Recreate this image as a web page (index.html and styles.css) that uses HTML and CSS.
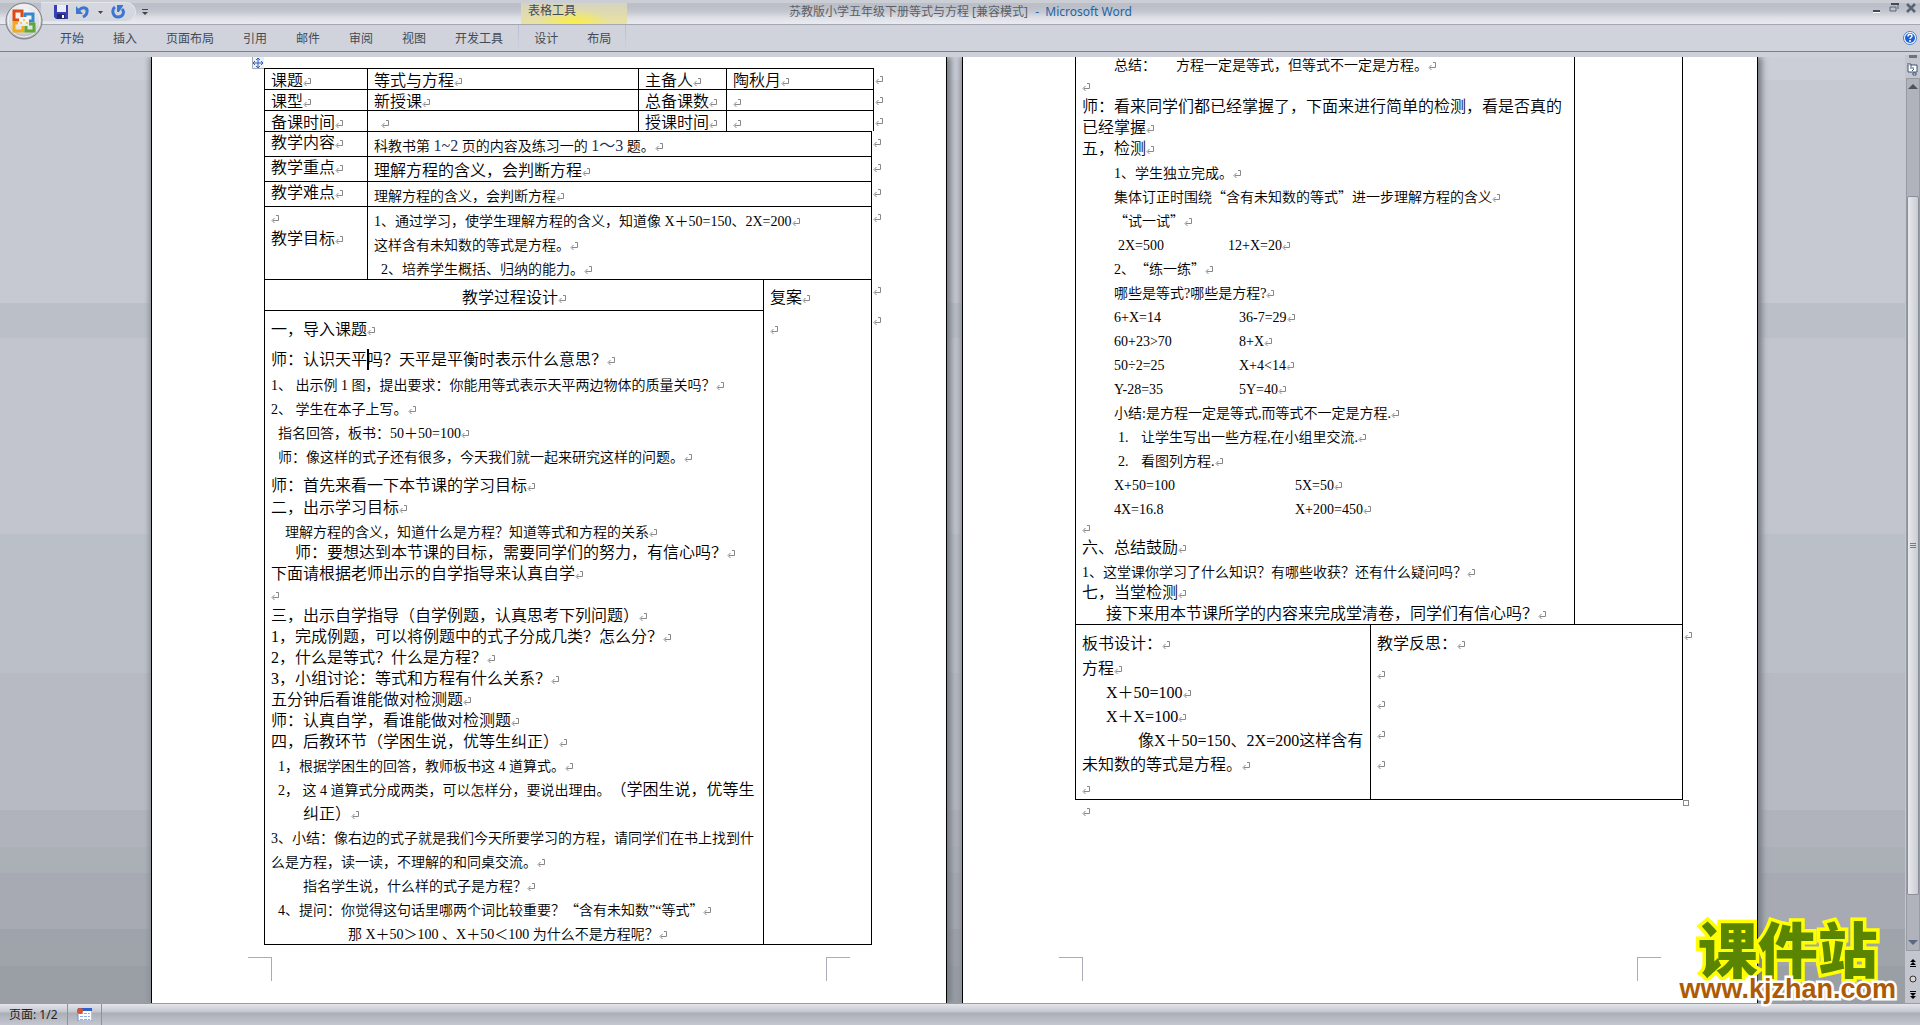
FILE: index.html
```html
<!DOCTYPE html>
<html lang="zh-CN">
<head>
    <meta charset="UTF-8">
    <meta name="viewport" content="width=device-width, initial-scale=1.0">
    <title>苏教版小学五年级下册等式与方程 - Microsoft Word</title>
    <link rel="stylesheet" href="styles.css">
</head>
<body>
    <header class="titlebar">
        <div class="quick-access">
            <button title="保存">
                <svg width="14" height="14" viewBox="0 0 14 14"><path d="M0 0h14v14H2l-2-2z" fill="#3b3fb5"/><path d="M3 0h9v7H3z" fill="#e9edfb"/><path d="M3 9h8v5H3z" fill="#23276f"/><path d="M8 10h2v3H8z" fill="#fff"/></svg>
            </button>
            <button title="撤消">
                <svg width="14" height="14" viewBox="0 0 14 14"><path d="M3 5c4-4 9-2 8 2 0 2-2 4-4 5" fill="none" stroke="#3d76d2" stroke-width="3"/><path d="M0 1v8h7z" fill="#3d76d2"/></svg>
            </button>
            <button title="撤消列表">
                <svg width="5" height="3" viewBox="0 0 5 3"><path d="M0 0h5L2.500 3z" fill="#444"/></svg>
            </button>
            <button title="重复">
                <svg width="14" height="14" viewBox="0 0 14 14"><path d="M4 2C0 5 2 12 7 12s7-5 4-8" fill="none" stroke="#3d76d2" stroke-width="3"/><path d="M6 0h6v1L8 7H6z" fill="#3d76d2"/></svg>
            </button>
        </div>
        <button class="customize" title="自定义快速访问工具栏">
            <svg width="6" height="6" viewBox="0 0 6 6"><path d="M0 0h6v1H0zM0 3h6L3 6z" fill="#444"/></svg>
        </button>
        <div class="context-title">表格工具</div>
        <div class="doc-title">苏教版小学五年级下册等式与方程 [兼容模式] <span class="app-name">- &nbsp;Microsoft Word</span></div>
        <div class="window-buttons">
            <button title="最小化"><svg width="10" height="10" viewBox="0 0 10 10"><path d="M1 7h7v2H1z" fill="#444a55"/><path d="M1 9h7v1H1z" fill="#fff"/></svg></button>
            <button title="还原"><svg width="10" height="10" viewBox="0 0 10 10"><path d="M2 1h7v5M1 4h6v4H1z" fill="none" stroke="#5a6478"/><path d="M2 0h8v2H2z" fill="#444a55"/></svg></button>
            <button title="关闭"><svg width="10" height="10" viewBox="0 0 10 10"><path d="M1 1l8 8M9 1L1 9" stroke="#596376" stroke-width="2.500"/></svg></button>
        </div>
    </header>
    <button class="office-button" title="Office 按钮">
        <svg width="38" height="38" viewBox="0 0 38 38">
            <defs>
                <radialGradient id="orb" cx="50%" cy="35%" r="65%"><stop offset="0" stop-color="#fff"/><stop offset="0.700" stop-color="#dcdde1"/><stop offset="1" stop-color="#a4a6ac"/></radialGradient>
            </defs>
            <circle cx="19" cy="19" r="18" fill="url(#orb)" stroke="#777a82"/>
            <circle cx="19" cy="19" r="16" fill="none" stroke="#f4f4f6"/>
            <g fill="none" stroke-width="3">
                <path d="M17 15V9H9v9h5" stroke="#dd4a13"/>
                <path d="M20 15v-3h8v7h-4" stroke="#3a86cf"/>
                <path d="M13 21H9v8h9v-5" stroke="#f3ab1b"/>
                <path d="M24 22h5v7h-8v-5" stroke="#5da837"/>
            </g>
            <path d="M18 17h2v2h-2zM15 20h2v2h-2zM21 20h2v2h-2z" fill="#f6c560"/>
        </svg>
    </button>
    <nav class="tabs">
        <button>开始</button>
        <button>插入</button>
        <button>页面布局</button>
        <button>引用</button>
        <button>邮件</button>
        <button>审阅</button>
        <button>视图</button>
        <button>开发工具</button>
        <div class="context-tabs">
            <button>设计</button>
            <button>布局</button>
        </div>
        <button class="help" title="帮助">
            <svg width="14" height="14" viewBox="0 0 14 14"><circle cx="7" cy="7" r="6.500" fill="#fff" stroke="#4a7ec4"/><circle cx="7" cy="7" r="5" fill="#1f5fd6"/><path d="M5 5.500c0-3 4-3 4-.5 0 1.500-2 1.500-2 3M7 9v2" fill="none" stroke="#fff" stroke-width="1.500"/></svg>
        </button>
    </nav>

    <div class="workspace">
        <main class="pages">
            <section class="page">
                <div class="sheet sheet-first">
                    <svg class="move-handle" width="12" height="12" viewBox="0 0 12 12"><path d="M0 0h12v12H0z" fill="#eef0f4"/><path d="M.5 0v11.500H12" fill="none" stroke="#a9abb0"/><path d="M6 1v10M1 6h10M4 3l2-2 2 2M4 9l2 2 2-2M3 4L1 6l2 2M9 4l2 2-2 2" fill="none" stroke="#2e5fc0"/></svg>
                    <table class="info">
                        <colgroup><col class="c-label"><col><col class="c-key"><col class="c-value"></colgroup>
                        <tr><td><p>课题</p></td><td><p>等式与方程</p></td><td><p>主备人</p></td><td class="last"><p>陶秋月</p></td></tr>
                        <tr><td><p>课型</p></td><td><p>新授课</p></td><td><p>总备课数</p></td><td class="last"><p></p></td></tr>
                        <tr><td><p>备课时间</p></td><td><p class="in1"></p></td><td><p>授课时间</p></td><td class="last"><p></p></td></tr>
                    </table>
                    <table class="plan">
                        <colgroup><col class="c-label"><col><col class="c-review"></colgroup>
                        <tr><td><p>教学内容</p></td><td class="last" colspan="2"><p class="small">科教书第 <span class="num">1~2</span> 页的内容及练习一的 <span class="num">1～3</span> 题。</p></td></tr>
                        <tr><td><p>教学重点</p></td><td class="last" colspan="2"><p class="mid">理解方程的含义，会判断方程</p></td></tr>
                        <tr><td><p>教学难点</p></td><td class="last" colspan="2"><p class="small">理解方程的含义，会判断方程</p></td></tr>
                        <tr>
                            <td><p></p><p>教学目标</p></td>
                            <td class="last" colspan="2">
                                <p class="small">1、通过学习，使学生理解方程的含义，知道像 X＋50=150、2X=200</p>
                                <p class="small">这样含有未知数的等式是方程。</p>
                                <p class="small in1">2、培养学生概括、归纳的能力。</p>
                            </td>
                        </tr>
                        <tr><td class="heading" colspan="2"><p>教学过程设计</p></td><td class="heading review last"><p>复案</p></td></tr>
                        <tr>
                            <td colspan="2">
                                <p class="big">一，导入课题</p>
                                <p class="big">师：认识天平<span class="caret"></span>吗？天平是平衡时表示什么意思？</p>
                                <p class="small">1、 出示例 1 图，提出要求：你能用等式表示天平两边物体的质量关吗？</p>
                                <p class="small">2、 学生在本子上写。</p>
                                <p class="small in1">指名回答，板书：50＋50=100</p>
                                <p class="small in1">师：像这样的式子还有很多，今天我们就一起来研究这样的问题。</p>
                                <p class="big">师：首先来看一下本节课的学习目标</p>
                                <p>二，出示学习目标</p>
                                <p class="small in2">理解方程的含义，知道什么是方程？知道等式和方程的关系</p>
                                <p class="in3">师：要想达到本节课的目标，需要同学们的努力，有信心吗？</p>
                                <p>下面请根据老师出示的自学指导来认真自学</p>
                                <p></p>
                                <p>三，出示自学指导（自学例题，认真思考下列问题）</p>
                                <p>1，完成例题，可以将例题中的式子分成几类？怎么分？</p>
                                <p>2，什么是等式？什么是方程？</p>
                                <p>3，小组讨论：等式和方程有什么关系？</p>
                                <p>五分钟后看谁能做对检测题</p>
                                <p>师：认真自学，看谁能做对检测题</p>
                                <p>四，后教环节（学困生说，优等生纠正）</p>
                                <p class="small in1">1，根据学困生的回答，教师板书这 4 道算式。</p>
                                <p class="small hanging">2， 这 4 道算式分成两类，可以怎样分，要说出理由。<span class="larger">（学困生说，优等生<br>纠正）</span></p>
                                <p class="small">3、小结：像右边的式子就是我们今天所要学习的方程，请同学们在书上找到什<br>么是方程，读一读，不理解的和同桌交流。</p>
                                <p class="small in4">指名学生说，什么样的式子是方程？</p>
                                <p class="small in1">4、提问：你觉得这句话里哪两个词比较重要？<span class="cjk">“</span>含有未知数”“等式<span class="cjk">”</span></p>
                                <p class="small in6">那 X＋50＞100 、X＋50＜100 为什么不是方程呢？</p>
                            </td>
                            <td class="open last"><p class="big"></p></td>
                        </tr>
                    </table>
                </div>
                <div class="corners"><i class="corner-left"></i><i class="corner-right"></i></div>
            </section>

            <section class="page">
                <div class="sheet sheet-second">
                    <table class="lesson">
                        <colgroup><col><col class="c-review"></colgroup>
                        <tr>
                            <td>
                                <p class="small in4 pair"><span class="w-note">总结：</span>方程一定是等式，但等式不一定是方程。</p>
                                <p></p>
                                <p>师：看来同学们都已经掌握了，下面来进行简单的检测，看是否真的<br>已经掌握</p>
                                <p>五，检测</p>
                                <p class="small in4">1、学生独立完成。</p>
                                <p class="small in4">集体订正时围绕<span class="cjk">“</span>含有未知数的等式<span class="cjk">”</span>进一步理解方程的含义</p>
                                <p class="small in4"><span class="cjk">“</span>试一试<span class="cjk">”</span></p>
                                <p class="small in4 pair"><span class="w-try">2X=500</span>12+X=20</p>
                                <p class="small in4">2、<span class="cjk">“</span>练一练<span class="cjk">”</span></p>
                                <p class="small in4">哪些是等式?哪些是方程?</p>
                                <p class="small in4 pair"><span class="w-ask">6+X=14</span>36-7=29</p>
                                <p class="small in4 pair"><span class="w-ask">60+23&gt;70</span>8+X</p>
                                <p class="small in4 pair"><span class="w-ask">50÷2=25</span>X+4&lt;14</p>
                                <p class="small in4 pair"><span class="w-ask">Y-28=35</span>5Y=40</p>
                                <p class="small in4">小结:是方程一定是等式,而等式不一定是方程.</p>
                                <p class="small in4 pair"><span class="w-item">1.</span>让学生写出一些方程,在小组里交流.</p>
                                <p class="small in4 pair"><span class="w-item">2.</span>看图列方程.</p>
                                <p class="small in4 pair"><span class="w-write">X+50=100</span>5X=50</p>
                                <p class="small in4 pair"><span class="w-write">4X=16.8</span>X+200=450</p>
                                <p class="blank"></p>
                                <p>六、总结鼓励</p>
                                <p class="small">1、这堂课你学习了什么知识？有哪些收获？还有什么疑问吗？</p>
                                <p>七，当堂检测</p>
                                <p class="in3">接下来用本节课所学的内容来完成堂清卷，同学们有信心吗？</p>
                            </td>
                            <td></td>
                        </tr>
                    </table>
                    <table class="board">
                        <colgroup><col class="c-board"><col></colgroup>
                        <tr>
                            <td>
                                <p class="big">板书设计：</p>
                                <p class="mid">方程</p>
                                <p class="mid in3">X＋50=100</p>
                                <p class="mid in3">X＋X=100</p>
                                <p class="mid board-text">像X＋50=150、2X=200这样含有<br>未知数的等式是方程。</p>
                                <p class="mid"></p>
                            </td>
                            <td class="last">
                                <p class="big">教学反思：</p>
                                <p class="big"></p>
                                <p class="big"></p>
                                <p class="big"></p>
                                <p class="big"></p>
                            </td>
                        </tr>
                    </table>
                    <span class="resize-handle"></span>
                    <p class="after-table"></p>
                </div>
                <div class="corners"><i class="corner-left"></i><i class="corner-right"></i></div>
            </section>
        </main>

        <aside class="scrollbar">
            <i class="split"></i>
            <button title="标尺"><svg width="13" height="14" viewBox="0 0 13 14"><path d="M2 3h9v7H2z" fill="#fff" stroke="#3d5272"/><path d="M1 2h4v3M6 9l2-2M7 11h3v2H7zM4 6h4" fill="#fff" stroke="#3d5272"/></svg></button>
            <div class="track">
                <svg width="10" height="6" viewBox="0 0 10 6"><path d="M0 6l5-5 5 5z" fill="#4d535e"/></svg>
                <div class="thumb"><i></i><i></i><i></i></div>
                <svg width="10" height="6" viewBox="0 0 10 6"><path d="M0 0h10L5 5z" fill="#5c6880"/></svg>
            </div>
            <button title="前一页"><svg width="8" height="8" viewBox="0 0 8 8"><path d="M1 3l3-3 3 3zM1 6l3-3 3 3zM1 7h6v1H1z"/></svg></button>
            <button title="选择浏览对象"><svg width="8" height="8" viewBox="0 0 8 8"><circle cx="4" cy="4" r="3" fill="#d6d6ce" stroke="#333"/></svg></button>
            <button title="下一页"><svg width="8" height="8" viewBox="0 0 8 8"><path d="M1 0h6v1H1zM1 2h6L4 5zM1 5h6L4 8z"/></svg></button>
        </aside>
    </div>

    <footer class="statusbar">
        <span class="page-count">页面: 1/2</span>
        <button title="宏录制">
            <svg width="15" height="13" viewBox="0 0 15 13"><path d="M1 1h14v12H1z" fill="#fff" stroke="#6d8fc4"/><path d="M1 0h14v3H1z" fill="#2f62c9"/><path d="M3 5h3v1H3zM7 5h3v1H7zM11 5h2v1h-2zM3 8h3v1H3zM7 8h3v1H7zM11 8h2v1h-2zM3 11h3v1H3zM7 11h3v1H7zM11 11h2v1h-2z" fill="#8fb0e0"/><circle cx="3" cy="3" r="3" fill="#d9532c"/></svg>
        </button>
    </footer>

    <a class="site-mark" href="#"><span class="site-name">课件站</span><span class="site-url">www.kjzhan.com</span></a>
</body>
</html>
```
FILE: styles.css
```css
* {
    box-sizing: border-box;
}
body {
    margin: 0;
    height: 100vh;
    display: flex;
    flex-direction: column;
    overflow: hidden;
    position: relative;
    font-family: "Noto Sans", "Noto Sans CJK SC", sans-serif;
    font-size: 12px;
    color: #444a55;
    background: #cdd0d8;
}
button {
    margin: 0;
    padding: 0;
    border: none;
    background: none;
    font: inherit;
    color: inherit;
    cursor: pointer;
}
svg {
    display: block;
}

/* title bar and ribbon tabs */
.titlebar {
    flex: none;
    display: grid;
    grid-template-columns: 95px 24px 361px 106px 1fr 56px;
    height: 25px;
    padding-left: 41px;
    border-bottom: 1px solid #a4a7af;
    background: linear-gradient(#cbced5 0 3px, #bcbfc7 3px 7px, #c5c8d0 12px, #dfe1e6 18px, #e8ebf2);
}
.quick-access {
    display: flex;
    align-items: center;
    gap: 8px;
    height: 20px;
    margin-top: 2px;
    padding-left: 13px;
    border: 1px solid #e4e6ea;
    border-left: none;
    border-radius: 0 10px 10px 0;
    background: #d4d7de;
}
.customize {
    justify-self: start;
    padding-left: 6px;
}
.context-title {
    grid-column: 4;
    padding-left: 7px;
    line-height: 16px;
    margin-top: 3px;
    background: radial-gradient(ellipse at bottom, #fbf03c, rgba(251, 240, 60, 0) 50%), linear-gradient(#d6d3bf, #e9e3a0);
}
.doc-title {
    padding-left: 162px;
    line-height: 24px;
    color: #5b5f69;
}
.app-name {
    padding-left: 4px;
    color: #2464a8;
}
.window-buttons {
    display: flex;
    gap: 7px;
    align-items: flex-start;
    padding: 3px 0 0 8px;
}
.office-button {
    position: absolute;
    left: 5px;
    top: 2px;
    z-index: 2;
}
.tabs {
    flex: none;
    display: flex;
    height: 27px;
    padding-left: 45px;
    border-bottom: 1px solid #7c8088;
    background: #d0d3dc;
}
.tabs button {
    padding: 0 14px 1px 15px;
}
.context-tabs {
    display: flex;
    border: solid #b7bcd8;
    border-width: 0 1px;
    border-image: linear-gradient(#b7bcd8, #d0d3dc) 1;
    border-image-width: 0 1px;
    margin-left: 1px;
}
.tabs .help {
    margin-left: auto;
    padding: 0 3px 0 0;
}

/* workspace */
.workspace {
    flex: 1;
    min-height: 0;
    display: flex;
    padding-top: 5px;
    overflow: hidden;
}
.pages {
    flex: 1;
    display: flex;
    justify-content: center;
    gap: 15px;
    padding-left: 4px;
    overflow: hidden;
    background: linear-gradient(#cbced6 0 2.4%, #c6c9d1 0 26%, #bbc0c8 0 29.7%, #c2c5cd 0 50.4%, #bbc0c8 0 65.1%, #b7bac2 0 79.6%, #b0b3bb 0 83.5%, #abb0b7 0 86.3%, #a7aab2 0 92.2%, #9fa3aa 0 96.1%, #9a9ea5 0);
}
.page {
    flex: 0 1 796px;
    min-width: 0;
    display: flex;
    flex-direction: column;
    border: solid #000;
    border-width: 0 1px;
    background: #fff;
    box-shadow: 4px 0 6px #777b83, -2px 0 5px #8d9199;
}
.sheet {
    position: relative;
    margin: 0 72px 0 112px;
    font-family: "Liberation Serif", "Noto Sans CJK SC", serif;
    font-weight: 350;
    font-size: 16px;
    line-height: 21px;
    color: #000;
    white-space: nowrap;
    text-spacing-trim: space-all;
}
.sheet-first {
    margin-top: 11px;
}
.sheet-second {
    margin-top: -6px;
}
table {
    width: 100%;
    table-layout: fixed;
    border-spacing: 0;
    border-right: 1px solid #000;
}
td {
    padding: 0 0 0 6px;
    vertical-align: top;
    border: solid #000;
    border-width: 1px 0 0 1px;
}
.c-label { width: 103px; }
.c-key { width: 88px; }
.c-value { width: 147px; }
.c-review { width: 108px; }
.c-board { width: 295px; }
.info p {
    line-height: 20px;
    padding-top: 2px;
    margin-bottom: -2px;
}
.plan {
    width: calc(100% - 2px);
    border-bottom: 1px solid #000;
}
.lesson, .board {
    width: calc(100% - 2px);
}
.lesson td {
    border-top: none;
}
.board {
    border-bottom: 1px solid #000;
}
td.open {
    border-top: none;
}

/* paragraphs */
p {
    margin: 0;
    min-height: 20px;
}
.small {
    font-size: 14px;
    line-height: 24px;
    padding-top: 3px;
    margin-bottom: -3px;
}
.mid {
    line-height: 24px;
    padding-top: 2px;
    margin-bottom: -2px;
}
.big {
    padding: 8px 0 1px;
}
.blank {
    line-height: 18px;
    min-height: 18px;
}
.heading p {
    padding: 7px 0 2px;
}
.heading:first-child {
    padding: 0;
    text-align: center;
}
.in1 { padding-left: 7px; }
.in2 { padding-left: 14px; }
.in3 { padding-left: 24px; }
.in4 { padding-left: 32px; }
.in6 { padding-left: 77px; }
.hanging {
    padding-left: 32px;
    text-indent: -25px;
}
.board-text {
    text-indent: 56px;
}
.larger {
    font-size: 16px;
    line-height: 20px;
}
.num {
    font-size: 16px;
    line-height: 20px;
    color: #1b2f5c;
}
.cjk {
    font-family: "Noto Sans CJK SC", sans-serif;
    line-height: 20px;
}
.pair span {
    display: inline-block;
}
.w-note { width: 62px; }
.w-try { width: 114px; padding-left: 4px; }
.w-ask { width: 125px; }
.w-item { width: 27px; padding-left: 4px; }
.w-write { width: 181px; }
.caret {
    border-left: 2px solid #000;
    margin-right: -2px;
    padding: 2px 0;
}

/* paragraph and row-end marks */
p::after, .last::after {
    content: "";
    display: inline-block;
    width: 8px;
    height: 8px;
    text-indent: 0;
    background: url("data:image/svg+xml,%3Csvg xmlns='http://www.w3.org/2000/svg' width='8' height='8'%3E%3Cpath d='M5 .5h2.500v5H2M3.500 3L1 5.500 3.500 8' fill='none' stroke='%23888'/%3E%3C/svg%3E") no-repeat;
}
.last {
    position: relative;
}
.last::after {
    position: absolute;
    left: 100%;
    top: 7px;
    margin-left: 2px;
}
.move-handle {
    position: absolute;
    left: -12px;
    top: -11px;
}
.resize-handle {
    position: absolute;
    right: -4px;
    bottom: 15px;
    width: 6px;
    height: 6px;
    border: 1px solid #888;
}
.after-table {
    padding-left: 7px;
}
.corners {
    display: flex;
    justify-content: space-between;
    height: 24px;
    margin: auto 96px 22px;
}
.corners i {
    width: 24px;
    border: 1px solid #a9abb6;
    border-bottom: none;
}
.corners .corner-left {
    border-left: none;
}
.corners .corner-right {
    border-right: none;
}

/* scroll bar */
.scrollbar {
    flex: none;
    width: 15px;
    margin-top: -2px;
    display: flex;
    flex-direction: column;
    align-items: center;
    background: #c3c6ce;
}
.split {
    width: 8px;
    height: 3px;
    margin-bottom: 3px;
    background: #6f727a;
}
.scrollbar button {
    height: 16px;
}
.track {
    flex: 1;
    width: 14px;
    display: flex;
    flex-direction: column;
    align-items: center;
    margin: 1px 0 4px;
    padding: 4px 0;
    border: 1px solid #989ba3;
    background: #b0b3bb;
}
.thumb {
    width: 12px;
    flex: 0 0 81%;
    margin: auto 0 45px;
    display: flex;
    flex-direction: column;
    justify-content: center;
    align-items: center;
    gap: 1px;
    border: 1px solid #8b8f98;
    border-radius: 2px;
    background: linear-gradient(90deg, #e7e9ee, #c9ccd4);
}
.thumb i {
    width: 6px;
    height: 1px;
    background: #777b85;
}

/* status bar */
.statusbar {
    flex: none;
    display: flex;
    align-items: center;
    height: 22px;
    border-top: 1px solid #9a9ca4;
    background: linear-gradient(#e3e5ea, #c6c9d1 35%, #abafb7 45%, #c4c7cf);
    color: #222;
}
.page-count {
    padding: 0 9px;
    line-height: 21px;
    border-right: 1px solid #8f929a;
}
.statusbar button {
    height: 21px;
    padding: 0 9px;
    border-right: 1px solid #8f929a;
}

/* site mark */
.site-mark {
    position: absolute;
    right: 24px;
    bottom: 22px;
    display: flex;
    flex-direction: column;
    align-items: center;
    text-decoration: none;
    paint-order: stroke fill;
}
.site-name {
    font-family: "Noto Sans CJK SC", sans-serif;
    font-size: 60px;
    font-weight: 900;
    line-height: 56px;
    color: #5a8500;
    -webkit-text-stroke: 7px #ffff00;
}
.site-url {
    font-family: "Liberation Sans", sans-serif;
    font-size: 27px;
    font-weight: bold;
    line-height: 28px;
    color: #ad5a05;
    -webkit-text-stroke: 5px #fff;
}
```
